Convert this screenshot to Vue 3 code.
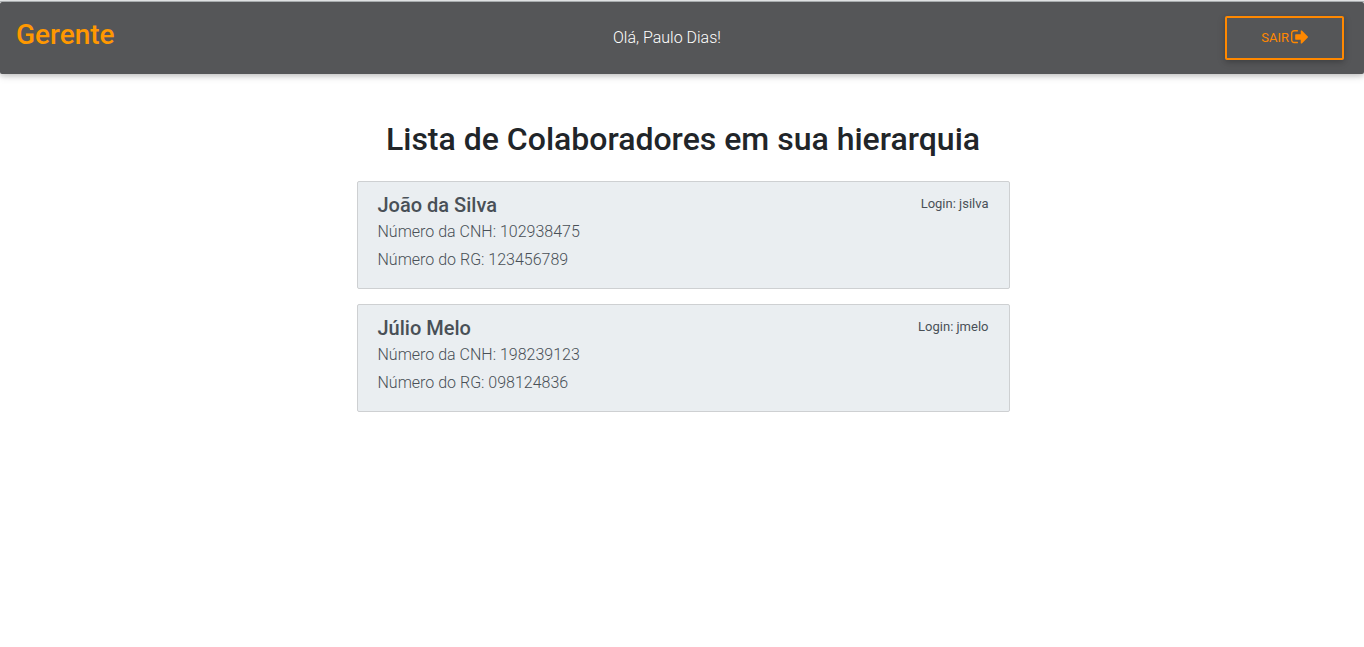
<script setup>
const people = [
  { name: 'João da Silva', login: 'jsilva', cnh: '102938475', rg: '123456789' },
  { name: 'Júlio Melo', login: 'jmelo', cnh: '198239123', rg: '098124836' },
]
</script>

<template>
  <div class="page">
    <header class="navbar">
      <h3 class="brand">Gerente</h3>
      <span class="greeting">Olá, Paulo Dias!</span>
      <button type="button" class="logout">
        SAIR
        <svg class="icon" viewBox="0 0 1568 1280" aria-hidden="true">
          <path
            fill="currentColor"
            d="M640 1120q0 4 1 20t.5 26.500-3 23.500-10 19.500-20.500 6.500H288q-119 0-203.500-84.500T0 928V288Q0 169 84.500 84.500T288 0h320q13 0 22.500 9.500T640 32q0 4 1 20t.5 26.500-3 23.500-10 19.500T608 128H288q-66 0-113 47t-47 113v640q0 66 47 113t113 47h312l11.500 1 11.500 3 8 5.500 7 9 2 13.500zM1568 640q0 26-19 45l-544 544q-19 19-45 19t-45-19-19-45V896H448q-26 0-45-19t-19-45V448q0-26 19-45t45-19h448V96q0-26 19-45t45-19 45 19l544 544q19 19 19 45z"
          />
        </svg>
      </button>
    </header>

    <main class="content">
      <h2 class="title">Lista de Colaboradores em sua hierarquia</h2>
      <ul class="list">
        <li v-for="person in people" :key="person.login" class="card">
          <div class="card-head">
            <h5 class="name">{{ person.name }}</h5>
            <small class="login">Login: {{ person.login }}</small>
          </div>
          <p class="detail">Número da CNH: {{ person.cnh }}</p>
          <p class="detail">Número do RG: {{ person.rg }}</p>
        </li>
      </ul>
    </main>
  </div>
</template>

<style>
body {
  margin: 0;
  background: #fff;
}
</style>

<style scoped>
.page {
  border-top: 1px solid #e9ebec;
  padding-top: 1px;
  background: linear-gradient(#b4b8ba 1px, transparent 1px);
  font-family: Roboto, sans-serif;
  font-size: 16px;
  font-weight: 300;
  line-height: 24px;
  color: #212529;
}
.navbar {
  display: flex;
  align-items: center;
  justify-content: space-between;
  padding: 8px 14px 8px 16px;
  background: #555658;
  border-radius: 2px;
  box-shadow: 0 2px 5px rgba(0, 0, 0, 0.16), 0 2px 10px rgba(0, 0, 0, 0.12);
}
.brand {
  margin: 0 0 6px;
  font-size: 28px;
  font-weight: 500;
  line-height: 34px;
  color: #ff9800;
}
.greeting {
  color: #fff;
}
.logout {
  display: flex;
  align-items: center;
  justify-content: center;
  gap: 2px;
  margin: 6px;
  padding: 10px 34px;
  border: 2px solid #ff8800;
  border-radius: 2px;
  background: transparent;
  box-shadow: 0 2px 5px rgba(0, 0, 0, 0.16), 0 2px 10px rgba(0, 0, 0, 0.12);
  font-family: inherit;
  font-size: 13px;
  font-weight: 400;
  line-height: 20px;
  color: #ff8800;
  cursor: pointer;
}
.icon {
  width: 17px;
  height: 14px;
  margin-bottom: 2px;
}
.content {
  max-width: 653px;
  margin: 0 auto;
  padding: 45px 16px 0 18px;
}
.title {
  margin: 0 0 22px;
  font-size: 32px;
  font-weight: 500;
  line-height: 40px;
  text-align: center;
}
.list {
  display: flex;
  flex-direction: column;
  gap: 15px;
  margin: 0;
  padding: 0;
  list-style: none;
}
.card {
  padding: 11px 20px 12px;
  border: 1px solid #ced0d2;
  border-radius: 2px;
  background: #eaeef1;
  color: #495057;
}
.card-head {
  display: flex;
  justify-content: space-between;
  margin-bottom: 3px;
}
.name {
  margin: 0;
  font-size: 20px;
  font-weight: 500;
  line-height: 24px;
}
.login {
  font-size: 13px;
  font-weight: 400;
  line-height: 22px;
}
.detail {
  margin: 0 0 4px;
}
</style>
